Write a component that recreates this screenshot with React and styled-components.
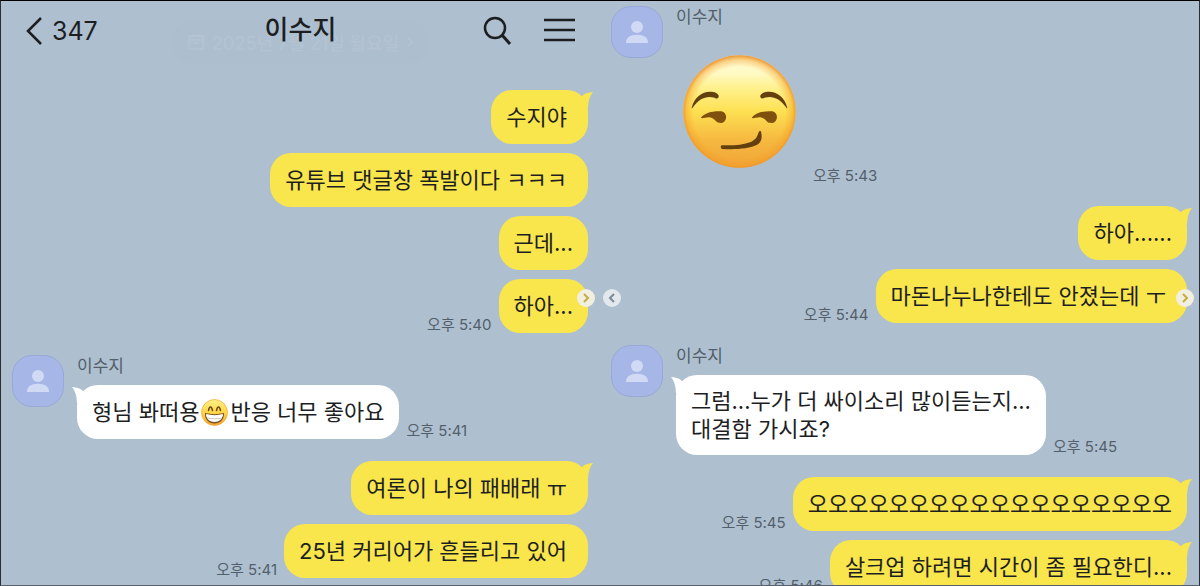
import React from "react";
import styled, { createGlobalStyle } from "styled-components";

const theme = {
  background: "#aebfd0",
  yellow: "#f9e54c",
  ink: "#1d1e1f",
  muted: "#535f6b",
  avatar: "#a6b6e7"
};

const firstScreen = [
  {
    mine: true,
    messages: [
      { text: "수지야", tail: true, roomy: true },
      { text: "유튜브 댓글창 폭발이다 ㅋㅋㅋ", roomy: true },
      { text: "근데..." },
      { text: "하아...", time: "오후 5:40" }
    ]
  },
  {
    messages: [
      {
        text: "형님 봐떠용",
        emoji: true,
        after: "반응 너무 좋아요",
        tail: true,
        time: "오후 5:41"
      }
    ]
  },
  {
    mine: true,
    messages: [
      { text: "여론이 나의 패배래 ㅠ", tail: true, roomy: true },
      { text: "25년 커리어가 흔들리고 있어", time: "오후 5:41", roomy: true }
    ]
  }
];

const secondScreen = [
  { messages: [{ sticker: true, time: "오후 5:43" }] },
  {
    mine: true,
    messages: [
      { text: "하아......", tail: true },
      { text: "마돈나누나한테도 안졌는데 ㅜ", time: "오후 5:44", roomy: true }
    ]
  },
  {
    messages: [
      {
        text: "그럼...누가 더 싸이소리 많이듣는지...\n대결함 가시죠?",
        tail: true,
        time: "오후 5:45"
      }
    ]
  },
  {
    mine: true,
    messages: [
      { text: "오오오오오오오오오오오오오오오오오오", tail: true, time: "오후 5:45" },
      { text: "살크업 하려면 시간이 좀 필요한디...", tail: true, time: "오후 5:46" }
    ]
  }
];

const Person = () => (
  <svg width="24" height="24" viewBox="0 0 24 24" fill="#d0daf4" aria-hidden="true">
    <circle cx="12" cy="7" r="6" />
    <path d="M1 23C1 17.500 5 14.800 12 14.800S23 17.500 23 23Z" />
  </svg>
);

const Smirk = () => (
  <svg width="113" height="113" viewBox="0 0 338 338" role="img" aria-label="smirk">
    <defs>
      <linearGradient id="smirkFace" x1="0" y1="0" x2="0" y2="1">
        <stop offset="0" stopColor="#fffbd6" />
        <stop offset="0.16" stopColor="#fffac4" />
        <stop offset="0.3" stopColor="#fff08a" />
        <stop offset="0.5" stopColor="#fde052" />
        <stop offset="0.75" stopColor="#f6b940" />
        <stop offset="1" stopColor="#f1a437" />
      </linearGradient>
      <radialGradient id="smirkEdge" cx="0.5" cy="0.51" r="0.51">
        <stop offset="0.8" stopColor="#f39a22" stopOpacity="0" />
        <stop offset="0.92" stopColor="#f39a22" stopOpacity="0.4" />
        <stop offset="1" stopColor="#e98a22" stopOpacity="0.9" />
      </radialGradient>
    </defs>
    <circle cx="169" cy="169" r="168" fill="url(#smirkFace)" />
    <circle cx="169" cy="169" r="168" fill="url(#smirkEdge)" />
    <g fill="#65400f">
      <path d="M26 158C34 124 62 106 90 111C102 113 110 121 106 127C103 133 98 129 91 127C70 121 46 132 31 155C29 159 25 161 26 158Z" />
      <path d="M312 158C304 124 276 106 248 111C236 113 228 121 232 127C235 133 240 129 247 127C268 121 292 132 307 155C309 159 313 161 312 158Z" />
      <path d="M116 270C150 271 180 269 203 260C218 254 222 244 226 232C228 226 234 226 234 232C237 248 235 260 223 268C196 282 153 283 117 281C112 280 112 270 116 270Z" />
    </g>
    <g fill="#80500f">
      <path d="M54 187C65 173 88 167 111 168C123 168 129 176 129 186C128 199 119 205 108 203C98 202 96 190 82 187C72 185 61 190 56 189Z" />
      <path d="M206 187C217 173 240 167 263 168C275 168 281 176 281 186C280 199 271 205 260 203C250 202 248 190 234 187C224 185 213 190 208 189Z" />
    </g>
  </svg>
);

const Grin = () => (
  <GrinIcon viewBox="0 0 54 54" role="img" aria-label="grin">
    <defs>
      <linearGradient id="grinFace" x1="0" y1="0" x2="0" y2="1">
        <stop offset="0" stopColor="#fff08a" />
        <stop offset="0.5" stopColor="#fcd746" />
        <stop offset="1" stopColor="#f0a334" />
      </linearGradient>
    </defs>
    <circle cx="27" cy="27" r="26" fill="url(#grinFace)" stroke="#f2ab36" strokeWidth="1.500" />
    <path
      d="M15 23C16 18 18 16 19 16S22 18 23 23M31 23C32 18 34 16 35 16S38 18 39 23"
      fill="none"
      stroke="#70470f"
      strokeWidth="3"
      strokeLinecap="round"
    />
    <path d="M8 28C20 31 34 31 46 28C47 41 38 49 27 49S7 41 8 28Z" fill="#7c5423" />
    <path d="M10 30C21 33 33 33 44 30C44 40 36 46 27 46S10 40 10 30Z" fill="#ffffff" />
    <path d="M12 38C22 40 32 40 42 38" fill="none" stroke="#b9b3a5" strokeWidth="1.500" />
  </GrinIcon>
);

const Tail = ({ mine }) => (
  <TailShape $mine={mine} viewBox="0 0 14 18" aria-hidden="true">
    <path d="M0 9L3 6Q6 2.500 14 2Q9.500 7 9 18H4Z" fill="currentColor" />
  </TailShape>
);

const Chevron = ({ back }) => (
  <svg width="8" height="10" viewBox="0 0 8 10" aria-hidden="true">
    <path
      d={back ? "M6 1L2 5L6 9" : "M2 1L6 5L2 9"}
      fill="none"
      stroke="currentColor"
      strokeWidth="2"
    />
  </svg>
);

const Message = ({ message, mine }) => (
  <MessageRow $mine={mine}>
    {message.sticker ? (
      <Sticker>
        <Smirk />
      </Sticker>
    ) : (
      <Bubble $mine={mine} $roomy={message.roomy}>
        {message.tail && <Tail mine={mine} />}
        <p>
          {message.text}
          {message.emoji && <Grin />}
          {message.after}
        </p>
      </Bubble>
    )}
    {message.time && <Time>{message.time}</Time>}
  </MessageRow>
);

const Conversation = ({ groups }) =>
  groups.map((group, index) => (
    <Group key={index}>
      {!group.mine && (
        <Avatar>
          <Person />
        </Avatar>
      )}
      <Messages>
        {!group.mine && <Name>이수지</Name>}
        {group.messages.map((message, i) => (
          <Message key={i} message={message} mine={group.mine} />
        ))}
      </Messages>
    </Group>
  ));

const App = () => (
  <>
    <GlobalStyle />
    <Page>
      <Panel>
        <Header>
          <BackButton type="button" aria-label="뒤로">
            <svg width="18" height="30" viewBox="0 0 18 30" fill="none" stroke="currentColor" strokeWidth="2.500">
              <path d="M16 2L3 15L16 28" />
            </svg>
            347
          </BackButton>
          <Title>이수지</Title>
          <Actions>
            <IconButton type="button" aria-label="검색">
              <svg width="32" height="32" viewBox="0 0 32 32" fill="none" stroke="currentColor" strokeWidth="2.500">
                <circle cx="13" cy="13" r="10" />
                <path d="M20 20L28 29" strokeWidth="3" />
              </svg>
            </IconButton>
            <IconButton type="button" aria-label="메뉴">
              <svg width="32" height="32" viewBox="0 0 32 32" fill="none" stroke="currentColor" strokeWidth="2.500">
                <path d="M0 5H31M0 15H31M0 25H31" />
              </svg>
            </IconButton>
          </Actions>
          <DatePill>
            <svg width="18" height="18" viewBox="0 0 18 18" fill="none" stroke="currentColor" strokeWidth="2">
              <path d="M2 3H16V16H2ZM2 7H16M6 1V4M12 1V4M6 10H12" />
            </svg>
            2025년 7월 21일 월요일
            <Chevron />
          </DatePill>
        </Header>
        <Chat $offset={29}>
          <Conversation groups={firstScreen} />
        </Chat>
        <Next type="button" aria-label="다음">
          <Chevron />
        </Next>
      </Panel>
      <Panel>
        <Chat $offset={5}>
          <Conversation groups={secondScreen} />
        </Chat>
        <Previous type="button" aria-label="이전">
          <Chevron back />
        </Previous>
        <Next type="button" aria-label="다음">
          <Chevron />
        </Next>
      </Panel>
    </Page>
  </>
);

export default App;

const GlobalStyle = createGlobalStyle`
  * {
    box-sizing: border-box;
  }

  body {
    margin: 0;
    background-color: ${theme.background};
    color: ${theme.ink};
    font-family: Inter, "Noto Sans CJK KR", sans-serif;
  }

  button {
    padding: 0;
    border: 0;
    background: none;
    color: inherit;
    font: inherit;
    cursor: pointer;
  }

  svg {
    display: block;
    flex: none;
  }

  p, h1 {
    margin: 0;
  }
`;

const Page = styled.main`
  display: grid;
  grid-template-columns: 1fr 1fr;
  height: 100vh;
  overflow: hidden;
  border: 1px solid #2b2f35;
  border-top-color: #000000;
  border-bottom-color: #59626c;
`;

const Panel = styled.section`
  position: relative;
  min-width: 0;
`;

const Header = styled.header`
  position: relative;
  display: grid;
  grid-template-columns: 1fr auto 1fr;
  align-items: center;
  height: 60px;
  padding: 0 24px;
`;

const BackButton = styled.button`
  display: flex;
  align-items: center;
  gap: 9px;
  justify-self: start;
  font-size: 25px;
  line-height: 30px;
`;

const Title = styled.h1`
  padding-bottom: 2px;
  font-size: 26px;
  font-weight: 500;
  line-height: 32px;
`;

const Actions = styled.div`
  display: flex;
  gap: 30px;
  justify-self: end;
`;

const IconButton = styled.button`
  width: 32px;
  height: 32px;
`;

const DatePill = styled.div`
  position: absolute;
  z-index: -1;
  top: 20px;
  left: 50%;
  display: flex;
  align-items: center;
  gap: 7px;
  height: 42px;
  padding: 0 15px;
  border-radius: 21px;
  transform: translateX(-50%);
  background-color: #adbecf;
  color: #b3c3d3;
  font-size: 18px;
  font-weight: 500;
  white-space: nowrap;
`;

const Chat = styled.div`
  display: flex;
  flex-direction: column;
  gap: 22px;
  padding: ${props => props.$offset}px 12px 0 11px;
`;

const Group = styled.div`
  display: flex;
  gap: 13px;
`;

const Avatar = styled.div`
  display: flex;
  flex: none;
  align-items: center;
  justify-content: center;
  width: 52px;
  height: 52px;
  border: 1px solid #98a8d8;
  border-radius: 20px;
  background-color: ${theme.avatar};
`;

const Messages = styled.div`
  display: flex;
  flex: 1;
  flex-direction: column;
  gap: 9px;
  min-width: 0;
`;

const Name = styled.div`
  height: 21px;
  color: ${theme.muted};
  font-size: 17px;
  line-height: 23px;
`;

const MessageRow = styled.div`
  display: flex;
  flex-direction: ${props => (props.$mine ? "row-reverse" : "row")};
  align-items: flex-end;
  gap: 7px;
`;

const Bubble = styled.div`
  position: relative;
  display: flex;
  align-items: center;
  min-height: 54px;
  padding: 12px ${props => (props.$roomy ? 21 : 15)}px 12px 15px;
  border-radius: 21px;
  background-color: ${props => (props.$mine ? theme.yellow : "#ffffff")};
  font-size: 22px;
  line-height: 28px;
  white-space: pre;
`;

const TailShape = styled.svg`
  position: absolute;
  top: 0;
  ${props => (props.$mine ? "right" : "left")}: -5px;
  width: 14px;
  height: 18px;
  color: ${props => (props.$mine ? theme.yellow : "#ffffff")};
  transform: ${props => (props.$mine ? "none" : "scaleX(-1)")};
`;

const GrinIcon = styled.svg`
  display: inline-block;
  width: 27px;
  height: 27px;
  margin: 0 2px;
  vertical-align: -6px;
`;

const Sticker = styled.div`
  padding: 19px 10px 16px 7px;
`;

const Time = styled.time`
  color: ${theme.muted};
  font-size: 15px;
  line-height: 16px;
  white-space: nowrap;
`;

const PageButton = styled.button`
  position: absolute;
  top: 288px;
  display: flex;
  align-items: center;
  justify-content: center;
  width: 18px;
  height: 18px;
  border-radius: 50%;
`;

const Next = styled(PageButton)`
  right: 5px;
  && {
    background-color: #f1efe0;
    color: #c9ab3f;
  }
`;

const Previous = styled(PageButton)`
  left: 3px;
  && {
    background-color: #e3e8ed;
    color: #7c8b99;
  }
`;
